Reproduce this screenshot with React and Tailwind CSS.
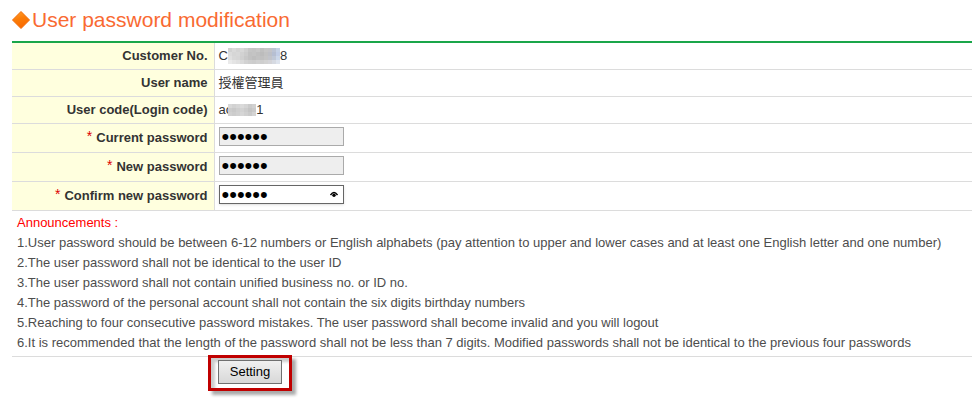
import React, { useState } from "react";

const accountRows = [
  { label: "Customer No.", start: "C", end: "8", mask: "customer" },
  { label: "User name", start: "授權管理員" },
  { label: "User code(Login code)", start: "ac", end: "1", mask: "code" },
];

const notes = [
  "1.User password should be between 6-12 numbers or English alphabets (pay attention to upper and lower cases and at least one English letter and one number)",
  "2.The user password shall not be identical to the user ID",
  "3.The user password shall not contain unified business no. or ID no.",
  "4.The password of the personal account shall not contain the six digits birthday numbers",
  "5.Reaching to four consecutive password mistakes. The user password shall become invalid and you will logout",
  "6.It is recommended that the length of the password shall not be less than 7 digits. Modified passwords shall not be identical to the previous four passwords",
];

// Mosaic cells that hide part of an account value
const masks = {
  customer: {
    cell: 4,
    rows: [
      ["#d2d2d2", "#dadada", "#d4d4d4", "#d8d8d8", "#d0d0d0", "#c6c6c6", "#c4c4c4", "#c8c8c8", "#c0c0c0", "#c6c6c6", "#c4c4c8", "#bcc4d4", "#c6d2e6"],
      ["#dcdcdc", "#d6d6d6", "#d8d8d8", "#d2d2d2", "#cccccc", "#c2c2c2", "#c4c4c4", "#c0c0c0", "#bcbcbc", "#c2c2c2", "#bec0c6", "#b6bfd2", "#c2cee6"],
      ["#e0e0e0", "#d8d8d8", "#d6d6d6", "#d0d0d0", "#c8c8c8", "#c2c2c2", "#bebebe", "#c2c2c2", "#c0c0c0", "#c4c4c4", "#c2c4ca", "#c0c8d6", "#ccd8ea"],
      ["#eaeaea", "#e4e4e4", "#e0e0e0", "#dadada", "#d2d2d2", "#cecece", "#cccccc", "#d0d0d0", "#cecece", "#d2d2d2", "#d4d4d8", "#d6dae2", "#dee4ee"],
    ],
  },
  code: {
    cell: 4,
    rows: [
      ["#d8d8d8", "#d2d2d2", "#d6d6d6", "#dadada", "#d4d4d4", "#cacaca", "#d0d0d0"],
      ["#cccccc", "#c8c8c8", "#cecece", "#d2d2d2", "#cccccc", "#c4c4c4", "#cacaca"],
      ["#d0d0d0", "#cccccc", "#d0d0d0", "#d6d6d6", "#d0d0d0", "#cacaca", "#d4d4d4"],
    ],
  },
};

const Mask = ({ name }) => {
  const { cell, rows } = masks[name];
  const width = cell * rows[0].length;
  const height = cell * rows.length;

  return (
    <svg
      width={width}
      height={height}
      className={name === "code" ? "-ml-1" : ""}
      shapeRendering="crispEdges"
      aria-hidden="true"
    >
      {rows.map((row, y) =>
        row.map((fill, x) => (
          <rect key={`${x}-${y}`} x={x * cell} y={y * cell} width={cell} height={cell} fill={fill} />
        ))
      )}
    </svg>
  );
};

const Diamond = () => (
  <svg width="20" height="20" viewBox="0 0 20 20" aria-hidden="true">
    <defs>
      <linearGradient id="diamond" x1="0" y1="0" x2="0.3" y2="1">
        <stop offset="0" stopColor="#ffa030" />
        <stop offset="0.5" stopColor="#fb7d08" />
        <stop offset="1" stopColor="#f96a00" />
      </linearGradient>
    </defs>
    <path
      d="M9 1.5 L17.5 10 L9 18.5 L0.5 10 Z"
      fill="url(#diamond)"
      stroke="#f26a05"
      strokeWidth="1"
      strokeLinejoin="round"
    />
  </svg>
);

const PasswordRow = ({ id, label, value, onChange, active }) => (
  <tr className="h-[29px] border-b border-[#dcdcdc]">
    <th scope="row" className="border-r border-[#dcdcdc] bg-[#ffffde] pr-1.5 text-right font-bold">
      <label htmlFor={id} className="flex items-start justify-end gap-1">
        <span className="text-sm leading-4 font-normal text-[#d00]">*</span>
        {label}
      </label>
    </th>
    <td className="px-1 pb-0.5">
      <div className="relative w-[125px]">
        <input
          id={id}
          type="password"
          value={value}
          onChange={(e) => onChange(e.target.value)}
          className={
            active
              ? "block h-[19px] w-full border border-[#666] bg-white px-0.5 text-[22px] leading-4 text-black shadow outline-none"
              : "block h-[19px] w-full border border-[#aaa] bg-[#eee] px-0.5 text-[22px] leading-4 text-black outline-none"
          }
        />
        {active && (
          <svg className="absolute top-1.5 right-1.5" width="8" height="7" viewBox="0 0 8 7" aria-hidden="true">
            <path d="M0.5 4 Q4 -0.8 7.5 4" fill="none" stroke="#000" strokeWidth="1.5" />
            <circle cx="4" cy="4.3" r="1.7" fill="#000" />
          </svg>
        )}
      </div>
    </td>
  </tr>
);

const App = () => {
  const [current, setCurrent] = useState("abc123");
  const [password, setPassword] = useState("abc456");
  const [confirm, setConfirm] = useState("abc456");

  return (
    <main className="pt-2 pb-4 pl-3 font-['Liberation_Sans','Noto_Sans_CJK_TC',sans-serif] text-[13px] leading-5 text-[#333]">
      <h1 className="flex h-[33px] items-start text-[21px] leading-6 text-[#f96a32]">
        <span className="pt-0.5">
          <Diamond />
        </span>
        User password modification
      </h1>
      <form onSubmit={(e) => e.preventDefault()}>
        <table className="w-full table-fixed border-collapse border-t-2 border-[#1aa64a]">
          <colgroup>
            <col className="w-[202px]" />
            <col />
          </colgroup>
          <tbody>
            {accountRows.map((row) => (
              <tr key={row.label} className="h-[27px] border-b border-[#dcdcdc]">
                <th scope="row" className="border-r border-[#dcdcdc] bg-[#ffffde] pr-1.5 text-right font-bold">
                  {row.label}
                </th>
                <td className="px-1">
                  <div className="flex items-center">
                    {row.start}
                    {row.mask && <Mask name={row.mask} />}
                    {row.end}
                  </div>
                </td>
              </tr>
            ))}
            <PasswordRow id="current" label="Current password" value={current} onChange={setCurrent} />
            <PasswordRow id="new" label="New password" value={password} onChange={setPassword} />
            <PasswordRow id="confirm" label="Confirm new password" value={confirm} onChange={setConfirm} active />
          </tbody>
        </table>
        <section className="border-b border-[#dcdcdc] px-[5px] pt-0.5 pb-[3px] text-[#4d4d4d]">
          <h2 className="text-[#f00]">Announcements&nbsp;:</h2>
          {notes.map((note) => (
            <p key={note}>{note}</p>
          ))}
        </section>
        {/* Highlighted submit button */}
        <div className="relative -mt-0.5 ml-49 flex w-21 border-3 border-[#c00000] px-[7px] pt-0.5 pb-1 shadow-[4px_4px_3px_#0005,inset_4px_4px_3px_#0003]">
          <button
            type="submit"
            className="h-6 w-16 border border-[#707070] bg-linear-to-b from-[#f0f0f0] to-[#d8d8d8] text-[13px] leading-5 text-black"
          >
            Setting
          </button>
        </div>
      </form>
    </main>
  );
};

export default App;
